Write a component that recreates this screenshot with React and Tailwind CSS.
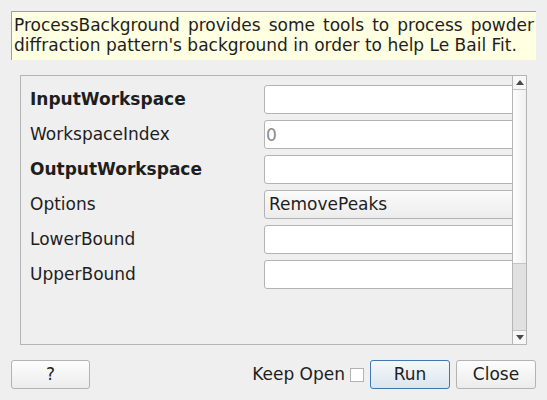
import { useState } from 'react'

const rows = [
  { label: 'InputWorkspace', bold: true },
  { label: 'WorkspaceIndex', placeholder: '0' },
  { label: 'OutputWorkspace', bold: true },
  { label: 'Options', combo: 'RemovePeaks' },
  { label: 'LowerBound' },
  { label: 'UpperBound' },
]

function Field({ row }) {
  if (row.combo) {
    return (
      <div className="h-[29px] w-[260px] shrink-0 rounded-[3px] border border-[#b3b3b3] bg-gradient-to-b from-[#fbfbfb] to-[#ececec] pl-[4px] flex items-center text-[17px] text-[#1e1e1e]">
        {row.combo}
      </div>
    )
  }
  return (
    <input
      placeholder={row.placeholder}
      className="h-[29px] w-[260px] shrink-0 rounded-[3px] border border-[#b3b3b3] bg-white px-[1px] text-[17px] text-[#1e1e1e] placeholder:text-[#8a8a8a] outline-none"
    />
  )
}

function Scrollbar() {
  return (
    <div className="w-[14px] shrink-0 border-l border-[#b5b5b5] flex flex-col">
      {/* up arrow */}
      <div className="h-[14px] border-b border-[#c4c4c4] bg-[#f7f7f7] flex items-center justify-center">
        <svg width="8" height="5" viewBox="0 0 8 5">
          <path d="M0 5 L4 0 L8 5 Z" fill="#4a4a4a" />
        </svg>
      </div>
      {/* thumb */}
      <div className="h-[174px] border-b border-[#c4c4c4] bg-gradient-to-r from-[#fdfdfd] to-[#f0f0f0]" />
      {/* track */}
      <div className="flex-1 bg-[#e1e1e1]" />
      {/* down arrow */}
      <div className="h-[14px] border-t border-[#c4c4c4] bg-[#f7f7f7] flex items-center justify-center">
        <svg width="8" height="5" viewBox="0 0 8 5">
          <path d="M0 0 L8 0 L4 5 Z" fill="#4a4a4a" />
        </svg>
      </div>
    </div>
  )
}

export default function App() {
  const [keepOpen, setKeepOpen] = useState(false)

  return (
    <div
      className="w-[547px] h-[400px] bg-[#efefef] px-[11px] pt-[11px] flex flex-col text-[#1e1e1e]"
      style={{ fontFamily: '"DejaVu Sans", Verdana, sans-serif' }}
    >
      {/* Description */}
      <div className="h-[49px] border-t border-l border-[#a0a0a0] bg-[#ffffe1] px-[2px] pt-[3px] text-[17px] leading-[20px] text-justify">
        ProcessBackground provides some tools to process powder diffraction pattern's background in order to help Le Bail Fit.
      </div>

      {/* Properties panel */}
      <div className="mt-[15px] mx-[9px] h-[270px] border border-[#b5b5b5] flex">
        <div className="flex-1 overflow-hidden pt-[9px] pl-[9px]">
          <div className="flex flex-col gap-[6px]">
            {rows.map(row => (
              <div key={row.label} className="flex items-center">
                <div className={`w-[234px] shrink-0 text-[17px] ${row.bold ? 'font-bold' : ''}`}>
                  {row.label}
                </div>
                <Field row={row} />
              </div>
            ))}
          </div>
        </div>
        <Scrollbar />
      </div>

      {/* Buttons */}
      <div className="mt-[15px] flex items-center text-[17px]">
        <button className="h-[29px] w-[79px] rounded-[3px] border border-[#b3b3b3] bg-gradient-to-b from-[#fdfdfd] to-[#ececec]">
          ?
        </button>
        <div className="flex-1" />
        <span className="mr-[5px]">Keep Open</span>
        <button
          onClick={() => setKeepOpen(v => !v)}
          className="w-[14px] h-[14px] border border-[#b3b3b3] bg-white mr-[6px]"
          aria-label="Keep Open"
        >
          {keepOpen && '✓'}
        </button>
        <button className="h-[29px] w-[80px] rounded-[3px] border border-[#3d78b0] bg-gradient-to-b from-[#f5f8fb] to-[#dbe5ee] mr-[6px]">
          Run
        </button>
        <button className="h-[29px] w-[80px] rounded-[3px] border border-[#b3b3b3] bg-gradient-to-b from-[#fdfdfd] to-[#ececec]">
          Close
        </button>
      </div>
    </div>
  )
}
